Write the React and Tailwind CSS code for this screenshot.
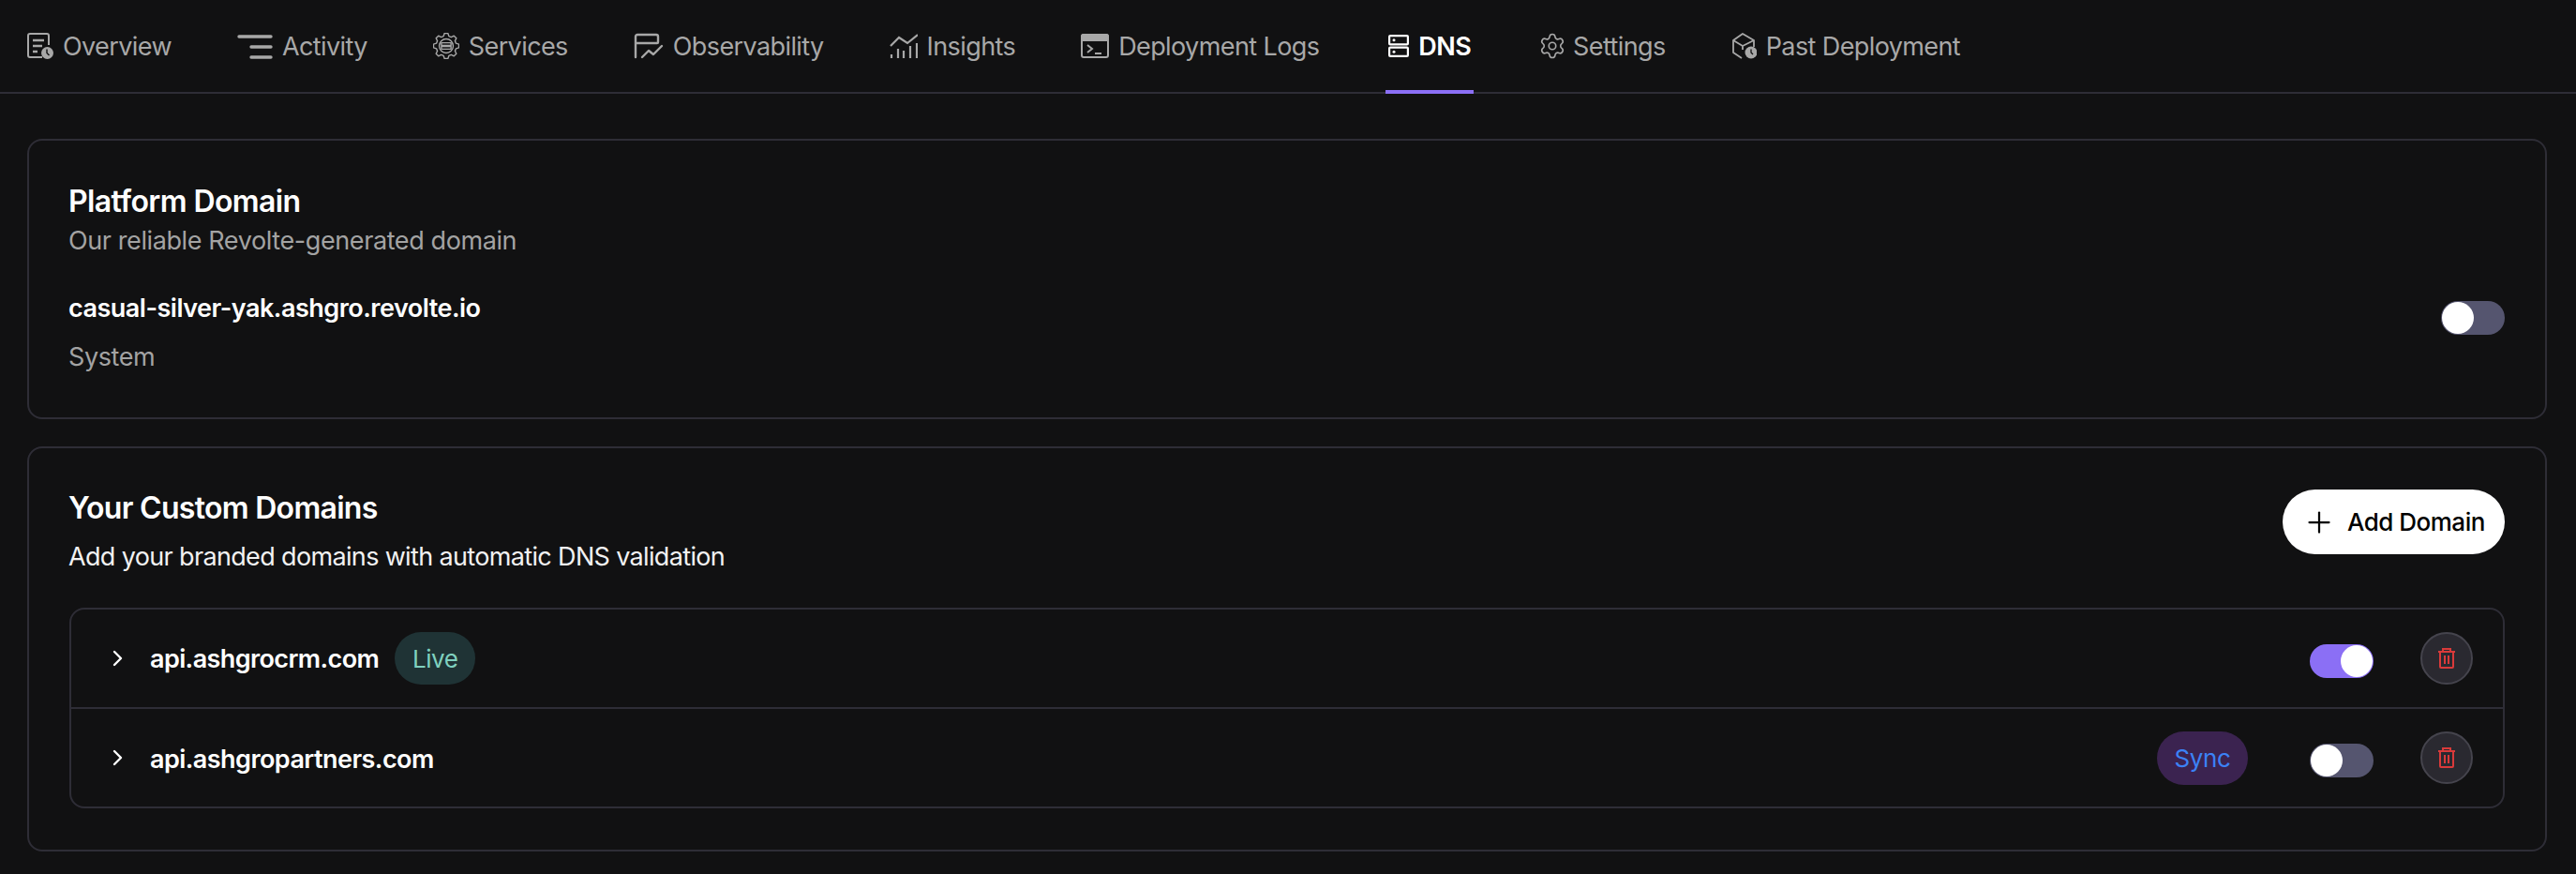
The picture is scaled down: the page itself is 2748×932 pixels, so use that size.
import { Settings, Plus } from 'lucide-react';

const font = { fontFamily: 'Inter, sans-serif' };

// outline of a toothed gear, used by the Services icon
const gearPath = (() => {
  const pts = [];
  const teeth = 8;
  for (let i = 0; i < teeth; i++) {
    const a = (i * 2 * Math.PI) / teeth - Math.PI / 2;
    const step = (2 * Math.PI) / teeth;
    [[-0.34, 11.6], [-0.17, 14.6], [0.17, 14.6], [0.34, 11.6]].forEach(([k, r]) => {
      const t = a + k * step;
      pts.push(`${(15 + r * Math.cos(t)).toFixed(2)} ${(15 + r * Math.sin(t)).toFixed(2)}`);
    });
  }
  return `M${pts.join('L')}Z`;
})();

// --- nav icons, drawn from the reference ---
const OverviewIcon = () => (
  <svg width="28" height="28" viewBox="0 0 28 28" fill="none" stroke="currentColor" strokeWidth="2">
    <path d="M16 26H3a2 2 0 0 1-2-2V3a2 2 0 0 1 2-2h18a2 2 0 0 1 2 2v10" />
    <path d="M6 8h12M6 14h10M6 20h5" strokeWidth="2.4" />
    <circle cx="21.5" cy="21.5" r="6.5" fill="currentColor" stroke="none" />
    <path d="M21 17.5v4l2.5 2.5" stroke="#111112" strokeWidth="1.4" />
  </svg>
);

const ActivityIcon = () => (
  <svg width="38" height="28" viewBox="0 0 38 28" fill="none" stroke="currentColor" strokeWidth="3.4" strokeLinecap="round">
    <path d="M2 4h34M15 15h21M15 26h21" />
  </svg>
);

const ServicesIcon = () => (
  <svg width="28" height="28" viewBox="0 0 30 30" fill="none" stroke="currentColor" strokeWidth="1.5" strokeLinejoin="round">
    <path d={gearPath} />
    <circle cx="15" cy="15" r="8" />
    <rect x="9.500" y="11.400" width="11" height="3" />
    <rect x="9.500" y="15.600" width="11" height="3" />
  </svg>
);

const ObservabilityIcon = () => (
  <svg width="32" height="28" viewBox="0 0 32 28" fill="none" stroke="currentColor" strokeWidth="2.4" strokeLinecap="round" strokeLinejoin="round">
    <path d="M2 26V4a2 2 0 0 1 2-2h20a2 2 0 0 1 2 2v6a1 1 0 0 1-1 1H2" />
    <path d="M9 26l7-7 5 4 9-9" />
  </svg>
);

const InsightsIcon = () => (
  <svg width="30" height="26" viewBox="0 0 30 26" fill="none" stroke="currentColor" strokeWidth="2.2">
    <path d="M1 13l9-9 9 6L30 1" />
    <path d="M2 26v-4M9 26V16M15 26v-8M22 26V13M29 26V10" />
  </svg>
);

const LogsIcon = () => (
  <svg width="30" height="26" viewBox="0 0 30 26" fill="none" stroke="currentColor" strokeWidth="2">
    <rect x="1" y="1" width="28" height="24" rx="2" />
    <path d="M1 3a2 2 0 0 1 2-2h24a2 2 0 0 1 2 2v4H1z" fill="currentColor" />
    <path d="M7 12l5 4-5 4M15 21h7" />
  </svg>
);

const DnsIcon = () => (
  <svg width="22" height="24" viewBox="0 0 22 24" fill="none" stroke="currentColor" strokeWidth="2.2">
    <rect x="1.100" y="1.100" width="19.800" height="9.300" rx="1" />
    <rect x="1.100" y="13.600" width="19.800" height="9.300" rx="1" />
    <circle cx="6" cy="5.800" r="1.500" fill="currentColor" stroke="none" />
    <circle cx="6" cy="18.300" r="1.500" fill="currentColor" stroke="none" />
  </svg>
);

const PastIcon = () => (
  <svg width="26" height="28" viewBox="0 0 26 28" fill="none" stroke="currentColor" strokeWidth="1.800" strokeLinejoin="round">
    <path d="M10 27l-9-6V8l10-7 12 7v7" />
    <path d="M1 8l10 6 12-6M11 14v4" />
    <circle cx="20" cy="21" r="6.500" fill="currentColor" stroke="none" />
    <path d="M20 17.500V21l2 2" stroke="#111112" strokeWidth="1.300" />
  </svg>
);

const ChevronIcon = () => (
  <svg width="12" height="18" viewBox="0 0 12 18" fill="none" stroke="currentColor" strokeWidth="2.400" strokeLinecap="round" strokeLinejoin="round">
    <path d="M3 2l7 7-7 7" />
  </svg>
);

const TrashIcon = () => (
  <svg width="18" height="22" viewBox="0 0 18 22" fill="none" stroke="currentColor" strokeWidth="2">
    <path d="M0 4h18M5 4V1h8v3" />
    <path d="M2 4v16a1 1 0 0 0 1 1h12a1 1 0 0 0 1-1V4" />
    <path d="M7 8v9M11 8v9" />
  </svg>
);

const tabs = [
  { label: 'Overview', icon: <OverviewIcon />, cls: 'text-[#a8a8a8]' },
  { label: 'Activity', icon: <ActivityIcon />, cls: 'text-[#a8a8a8]' },
  { label: 'Services', icon: <ServicesIcon />, cls: 'text-[#a8a8a8]' },
  { label: 'Observability', icon: <ObservabilityIcon />, cls: 'text-[#a8a8a8]' },
  { label: 'Insights', icon: <InsightsIcon />, cls: 'text-[#a8a8a8]' },
  { label: 'Deployment Logs', icon: <LogsIcon />, cls: 'text-[#a8a8a8]' },
  { label: 'DNS', icon: <DnsIcon />, cls: 'ml-[4px] font-semibold text-white', active: true },
  { label: 'Settings', icon: <Settings size={30} strokeWidth={1.3} className="-mx-[3px]" />, cls: 'ml-[5px] text-[#a8a8a8]' },
  { label: 'Past Deployment', icon: <PastIcon />, cls: 'ml-[1px] text-[#a8a8a8]' },
];

function Toggle({ on }) {
  return (
    <div className={`flex h-[36px] w-[68px] items-center rounded-full p-[1px] ${on ? 'justify-end bg-[#8b6ff5]' : 'justify-start bg-[#55556f]'}`}>
      <div className="h-[34px] w-[34px] rounded-full bg-white" />
    </div>
  );
}

function DeleteButton() {
  return (
    <button className="flex h-[56px] w-[56px] items-center justify-center rounded-full border-2 border-[#45444d] bg-[#2a2930] text-[#d93a3a]">
      <TrashIcon />
    </button>
  );
}

function DomainRow({ name, left, right, on, last }) {
  return (
    <div className={`flex items-center pl-[43px] pr-[32px] ${last ? 'h-[104px]' : 'h-[106px] border-b-2 border-[#2e2d36]'}`}>
      <span className="text-white"><ChevronIcon /></span>
      <span className={`ml-[29px] text-[27px] font-semibold leading-none text-white ${last ? 'pt-[2px] tracking-[-0.55px]' : 'tracking-[-0.6px]'}`}>{name}</span>
      {left}
      <div className="ml-auto flex items-center">
        {right}
        <div className="mt-[6px]"><Toggle on={on} /></div>
        <div className="ml-[50px]"><DeleteButton /></div>
      </div>
    </div>
  );
}

export default function App() {
  return (
    <div className="h-[932px] w-full overflow-hidden bg-[#111112]" style={font}>
      <nav className="flex h-[100px] gap-[64px] border-b-2 border-[#2e2d36] pl-[26px]">
        {tabs.map((t) => (
          <div
            key={t.label}
            className={`relative flex items-center gap-[10px] px-[3px] text-[27px] tracking-[-0.6px] ${t.cls}`}
          >
            {t.icon}
            <span className="pt-[2px]">{t.label}</span>
            {t.active && <div className="absolute inset-x-0 bottom-[-2px] h-[4px] bg-[#8b6ff5]" />}
          </div>
        ))}
      </nav>

      <main className="flex flex-col gap-[29px] pl-[29px] pr-[31px] pt-[48px]">
        <section className="flex h-[299px] justify-between rounded-[16px] border-2 border-[#2e2d36] px-[43px] pt-[45px]">
          <div className="-ml-[1px]">
            <h2 className="text-[32px] font-semibold leading-[40px] tracking-[-0.6px] text-white">Platform Domain</h2>
            <p className="mt-[2px] text-[27px] leading-[40px] tracking-[-0.4px] text-[#a3a3a3]">Our reliable Revolte-generated domain</p>
            <p className="mt-[32px] text-[27px] font-semibold leading-[40px] tracking-[-0.5px] text-white">casual-silver-yak.ashgro.revolte.io</p>
            <p className="mt-[13px] text-[27px] leading-[38px] tracking-[-0.4px] text-[#a3a3a3]">System</p>
          </div>
          <div className="mt-[126px]"><Toggle /></div>
        </section>

        <section className="h-[432px] rounded-[16px] border-2 border-[#2e2d36] px-[43px] pt-[44px]">
          <div className="flex items-start justify-between">
            <div className="-ml-[1px]">
              <h2 className="text-[32px] font-semibold leading-[40px] tracking-[-0.7px] text-white">Your Custom Domains</h2>
              <p className="mt-[12px] text-[27px] leading-[40px] tracking-[-0.65px] text-[#f2f2f2]">Add your branded domains with automatic DNS validation</p>
            </div>
            <button className="flex h-[69px] w-[237px] items-center gap-[12px] rounded-full bg-white pl-[21px] text-[26px] font-medium tracking-[-0.5px] text-black">
              <Plus size={36} strokeWidth={1.5} />
              Add Domain
            </button>
          </div>
          <div className="mt-[34px] rounded-[16px] border-2 border-[#2e2d36]">
            <DomainRow
              name="api.ashgrocrm.com"
              on
              left={<span className="ml-[17px] flex h-[56px] w-[86px] items-center justify-center rounded-full bg-[#1f3335] text-[26px] tracking-[-0.4px] text-[#7fd1bf]">Live</span>}
            />
            <DomainRow
              name="api.ashgropartners.com"
              last
              right={<span className="mr-[66px] flex h-[57px] w-[97px] items-center justify-center rounded-full bg-[#3b2350] text-[26px] tracking-[-0.4px] text-[#3b82f6]">Sync</span>}
            />
          </div>
        </section>
      </main>
    </div>
  );
}
